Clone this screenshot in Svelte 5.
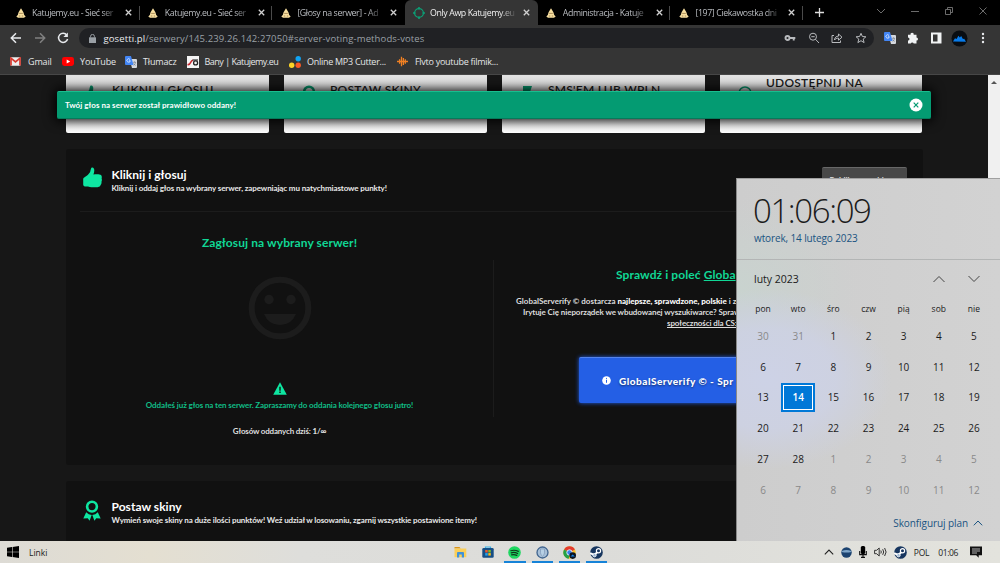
<script>
  const tabs = [
    { title: "Katujemy.eu - Sieć ser", icon: "hat" },
    { title: "Katujemy.eu - Sieć ser", icon: "hat" },
    { title: "[Głosy na serwer] - Ad", icon: "hat" },
    { title: "Only Awp Katujemy.eu", icon: "target", active: true },
    { title: "Administracja - Katuje", icon: "hat" },
    { title: "[197] Ciekawostka dni", icon: "hat" },
  ];

  const bookmarks = [
    { label: "Gmail", icon: "gmail", width: 52 },
    { label: "YouTube", icon: "youtube", width: 63 },
    { label: "Tłumacz", icon: "translate", width: 61.5 },
    { label: "Bany | Katujemy.eu", icon: "bans", width: 102.5 },
    { label: "Online MP3 Cutter...", icon: "cutter", width: 108 },
    { label: "Flvto youtube filmik...", icon: "flvto", width: 110 },
  ];

  const cards = [
    { title: "KLIKNIJ I GŁOSUJ", icon: "thumb" },
    { title: "POSTAW SKINY", icon: "award" },
    { title: "SMS'EM LUB WPLN", icon: "bookmark" },
    { title: "UDOSTĘPNIJ NA", icon: "ring", high: true },
  ];

  const weekdays = ["pon", "wto", "śro", "czw", "pią", "sob", "nie"];
  const today = 15;
  const days = Array.from({ length: 42 }, (_, i) => {
    if (i < 2) return { n: 30 + i, other: true };
    if (i < 30) return { n: i - 1, other: false };
    return { n: i - 29, other: true };
  });

  const apps = ["explorer", "store", "spotify", "badge", "chrome", "steam"];
</script>

{#snippet icon(name)}
  {#if name === "hat"}
    <svg width="10" height="10" viewBox="0 0 10 10">
      <path d="M5 .3 7.4 4.2 8.2 7 9.7 8.6 8 9.8H2L.3 8.6 1.8 7l.8-2.8z" fill="#f7dfa0" />
      <path d="M3.2 5.4h3.6M2.8 8h1.5M5.8 8h1.4" stroke="#8b6a3c" stroke-width=".7" />
    </svg>
  {:else if name === "target"}
    <svg width="12" height="12" viewBox="0 0 12 12" fill="none" stroke="#0b9f75" stroke-width="1.3">
      <circle cx="6" cy="6" r="4.4" />
      <path d="M6 0v2.4M6 9.6V12M0 6h2.4M9.600 6H12" stroke-width="1.6" />
    </svg>
  {:else if name === "gmail"}
    <svg width="11" height="9" viewBox="0 0 11 9">
      <rect x=".3" y=".3" width="10.4" height="8.4" rx="1" fill="#eee" />
      <path d="M1 8.5V1.2l4.5 3.7L10 1.2v7.3" fill="none" stroke="#d5392f" stroke-width="1.7" />
    </svg>
  {:else if name === "youtube"}
    <svg width="12" height="9" viewBox="0 0 12 9">
      <rect width="12" height="9" rx="2.4" fill="#f00" />
      <path d="m4.7 2.5 3.5 2-3.5 2z" fill="#fff" />
    </svg>
  {:else if name === "translate"}
    <svg width="12" height="12" viewBox="0 0 12 12">
      <path d="M4.5 3H11a1 1 0 0 1 1 1v7a1 1 0 0 1-1 1H7z" fill="#d5d8dd" />
      <path d="M8 6.300h3M9.500 5.300v1M10.600 6.400C10.300 8 9.300 9 8.600 9.400M8.500 7.400l2 2.200" stroke="#6c7785" stroke-width=".6" fill="none" />
      <path d="M1 0h5l2.500 9H1a1 1 0 0 1-1-1V1a1 1 0 0 1 1-1z" fill="#4285f4" />
      <path d="M5 3.500A1.700 1.700 0 1 0 5.300 4.800H4" fill="none" stroke="#e9f1ff" stroke-width=".8" />
    </svg>
  {:else if name === "bans"}
    <svg width="12" height="12" viewBox="0 0 12 12">
      <rect width="12" height="12" fill="#f5f5f5" />
      <path d="M.5 8.5c4 1 2.500-4.500 5.500-4.300" fill="none" stroke="#c82a31" stroke-width="1.6" />
      <circle cx="8.600" cy="6.900" r="2" fill="none" stroke="#222" stroke-width="1.3" />
      <path d="M5.600 4h5.400" stroke="#222" stroke-width="1.1" />
    </svg>
  {:else if name === "cutter"}
    <svg width="12" height="12" viewBox="0 0 12 12">
      <circle cx="9.2" cy="2.8" r="2.7" fill="#10a4f4" />
      <circle cx="2.7" cy="9.2" r="2.7" fill="#fdd326" />
      <circle cx="9.2" cy="9.2" r="2.7" fill="#fa5a25" />
    </svg>
  {:else if name === "flvto"}
    <svg width="11" height="11" viewBox="0 0 11 11" stroke="#f08023" stroke-width="1.3">
      <path d="M.8 4.8v1.4M2.6 3.3v4.4M4.5.8v9.4M6.4 2v7M8.3 3.2v4.6M10.2 4.8v1.4M0 5.5h11" />
    </svg>
  {:else if name === "thumb"}
    <svg width="19" height="21" viewBox="0 0 19 21" fill="currentColor">
      <path d="M.2 12.400Q0 10.800 1.600 10.200 5 8.500 7 5.200C8 3.400 7.500.6 9.300.6c2.600 0 2.300 4.400 1.100 6.900 2.800-.5 6.700-.4 7.600.5 1 1 .9 2.500.6 3.500.5 1.300.4 2.300-.1 3.200.2 1.600-.2 2.600-.9 3.300-.4 2-2.300 2.200-4.900 2.200-3.200 0-5.400-.2-7.700-.8H1.700Q.2 19.200.2 17.800z" />
    </svg>
  {:else if name === "award"}
    <svg width="18" height="21" viewBox="0 0 18 21">
      <circle cx="9" cy="6.600" r="4.900" fill="none" stroke="currentColor" stroke-width="2.600" />
      <path d="M3.200 12.200Q5.500 14.700 8.700 14.900L6.600 20.800 4.700 18.200.3 18.500zM14.800 12.200Q12.500 14.700 9.300 14.900l2.100 5.900 1.900-2.600 4.400.3z" fill="currentColor" />
    </svg>
  {:else if name === "bookmark"}
    <svg width="18" height="21" viewBox="0 0 18 21" fill="currentColor"><path d="M5 1h9l-3 9H5z" /></svg>
  {:else if name === "ring"}
    <svg width="18" height="21" viewBox="0 0 18 21" fill="none" stroke="currentColor" stroke-width="1.500"><circle cx="9" cy="8" r="6" /></svg>
  {:else if name === "steam"}
    <svg width="13" height="13" viewBox="0 0 13 13">
      <circle cx="6.500" cy="6.500" r="6.300" fill="#17365f" />
      <path d="m0 7.200 4.300 1.700 3.800-3.300" stroke="#fff" stroke-width="2" fill="none" />
      <circle cx="8.500" cy="4.700" r="2.100" fill="#17365f" stroke="#fff" stroke-width="1.200" />
      <circle cx="4.500" cy="9.200" r="1.700" fill="#9eb8d5" stroke="#fff" stroke-width=".8" />
    </svg>
  {:else if name === "explorer"}
    <svg width="13" height="12" viewBox="0 0 13 12">
      <path d="M.5 1h5l1.200 1.500H.5z" fill="#d9941a" />
      <path d="M.5 2.500h11.800v8.700H.5z" fill="#fbcf59" />
      <path d="M3 11.500V7q0-1 1-1h5q1 0 1 1v4.500H7.800V8.600H5.200v2.900z" fill="#3f92da" />
    </svg>
  {:else if name === "store"}
    <svg width="12" height="12" viewBox="0 0 12 12">
      <path d="M3.500 2.500V1h5v1.500" fill="none" stroke="#36b4ea" stroke-width="1.200" />
      <rect x=".3" y="2" width="11.400" height="9.700" rx="1.300" fill="#174f86" />
      <path d="M3.200 4h2.500v2.500H3.200z" fill="#f25a2b" /><path d="M6.300 4h2.500v2.500H6.300z" fill="#7fba26" />
      <path d="M3.200 7.100h2.500v2.500H3.200z" fill="#20a4ed" /><path d="M6.300 7.100h2.500v2.500H6.300z" fill="#fbbb18" />
    </svg>
  {:else if name === "spotify"}
    <svg width="13" height="13" viewBox="0 0 13 13">
      <circle cx="6.500" cy="6.500" r="6.300" fill="#1ed760" />
      <path d="M2.800 4.700q4-1.200 7.500.7M3.200 6.800q3.400-.9 6.400.7M3.600 8.800q2.800-.7 5.200.6" fill="none" stroke="#10371d" stroke-width="1.200" stroke-linecap="round" />
    </svg>
  {:else if name === "badge"}
    <svg width="13" height="13" viewBox="0 0 13 13">
      <circle cx="6.500" cy="6.500" r="5.500" fill="#a8c0d8" stroke="#41658f" stroke-width="1.300" />
      <path d="M4.500 3h4v3.800Q8.500 9 6.500 10.200 4.500 9 4.500 6.800z" fill="#b7d0e5" stroke="#7c98b8" stroke-width=".7" />
    </svg>
  {:else if name === "chrome"}
    <svg width="13" height="13" viewBox="0 0 13 13">
      <circle cx="6.500" cy="6.500" r="6.200" fill="#f9c22c" />
      <path d="M6.500 6.500 1.100 3.400a6.200 6.200 0 0 1 10.800 0z" fill="#e33b2e" />
      <path d="M6.500 6.500 1.100 3.400a6.200 6.200 0 0 0 4.700 9.300z" fill="#26a148" />
      <circle cx="6.500" cy="6.500" r="2.700" fill="#3b7de9" stroke="#fff" stroke-width=".8" />
      <circle cx="9.700" cy="9.600" r="3.300" fill="#0b1420" />
      <path d="M7.500 10.500 9.700 8.600l2.200 1.900z" fill="#1686ef" />
    </svg>
  {/if}
{/snippet}

<div class="screen">
  <nav class="tabs">
    {#each tabs as tab}
      <div class="tab" class:active={tab.active}>
        <span class="favicon">{@render icon(tab.icon)}</span>
        <span class="tab-title">{tab.title}</span>
        <svg class="close" width="7" height="7" viewBox="0 0 7 7"><path d="m.8.8 5.400 5.400M6.200.8.8 6.200" /></svg>
      </div>
    {/each}
    <svg class="plus" width="9" height="9" viewBox="0 0 9 9"><path d="M4.500 0v9M0 4.500h9" /></svg>
    <div class="window-controls">
      <svg width="10" height="10" viewBox="0 0 10 10"><path d="m1 3 4 4 4-4" /></svg>
      <svg width="10" height="10" viewBox="0 0 10 10"><path d="M1 5.500h8" /></svg>
      <svg width="10" height="10" viewBox="0 0 10 10"><path d="M1.500 3.500h5v5h-5zM3.500 3.500v-2h5v5h-2" /></svg>
      <svg width="10" height="10" viewBox="0 0 10 10"><path d="m1.500 1.500 7 7M8.500 1.500l-7 7" /></svg>
    </div>
  </nav>

  <div class="toolbar">
    <svg class="nav-icon" width="12" height="12" viewBox="0 0 12 12"><path d="M11 6H1.500M6 1.300 1.300 6 6 10.700" /></svg>
    <svg class="nav-icon dim" width="12" height="12" viewBox="0 0 12 12"><path d="M1 6h9.500M6 1.300 10.700 6 6 10.700" /></svg>
    <svg class="nav-icon" width="12" height="12" viewBox="0 0 12 12"><path d="M9.800 3A4.600 4.600 0 1 0 10.600 7" /><path d="M10.900.6v4.500H6.400z" fill="#e8eaed" stroke="none" /></svg>
    <div class="omnibox">
      <svg class="lock" width="7" height="9" viewBox="0 0 7 9"><path d="M0 3.300h7V9H0z" fill="#9aa0a6" /><path d="M1.600 3.500V2.300a1.900 1.900 0 0 1 3.800 0v1.200" fill="none" stroke="#9aa0a6" stroke-width="1" /></svg>
      <span class="url"><b>gosetti.pl</b>/serwery/145.239.26.142:27050#server-voting-methods-votes</span>
      <div class="omni-actions">
        <svg width="12" height="12" viewBox="0 0 12 12"><circle cx="3.500" cy="6" r="2" stroke-width="1.900" /><path d="M5.500 6h5.800M9.700 6v2.600" stroke-width="1.900" /></svg>
        <svg width="12" height="12" viewBox="0 0 12 12"><circle cx="5" cy="4.700" r="3.500" /><path d="m7.500 7.300 3.500 3.700M3.300 4.700h3.400" /></svg>
        <svg width="12" height="12" viewBox="0 0 12 12"><path d="M3 3.500H1v7h8.500v-2M3.400 8C3.800 5.300 5.300 4.200 7.500 4.100V2l3.500 3.200-3.500 3V6.100C5.700 6.100 4.400 6.700 3.400 8z" /></svg>
        <svg width="12" height="12" viewBox="0 0 12 12"><path d="m6 1.300 1.400 3.200 3.500.3-2.700 2.300.9 3.500L6 8.700l-3.100 1.900.9-3.500L1.100 4.800l3.500-.3z" /></svg>
      </div>
    </div>
    <div class="extensions">
      {@render icon("translate")}
      <svg width="12" height="12" viewBox="0 0 12 12" fill="#f1f3f4"><path d="M1 2.800h2.600a1.600 1.600 0 1 1 3 0h2.900v2.800a1.500 1.500 0 1 1 0 3v2.900H6.700a1.600 1.600 0 0 0-3 0H1V8.600a1.500 1.500 0 0 0 0-3z" /></svg>
      <svg width="12" height="12" viewBox="0 0 12 12"><path d="M1 .500h10.500v11H1z" fill="#f1f3f4" /><path d="M3 2.500h4.500v7H3z" fill="#353535" /></svg>
      <svg width="17" height="17" viewBox="0 0 17 17"><circle cx="8.500" cy="8.500" r="8" fill="#090d12" /><path d="M2 11.500 4 8.200l1.600.7 1.800-3.100 1.400 1.600 1.400-1.300 1.700 3 1.300-.3 1.800 2.900z" fill="#087bea" /></svg>
      <svg width="4" height="12" viewBox="0 0 4 12" fill="#e8eaed"><circle cx="2" cy="2" r="1.200" /><circle cx="2" cy="6" r="1.200" /><circle cx="2" cy="10" r="1.200" /></svg>
    </div>
  </div>

  <div class="bookmarks">
    {#each bookmarks as mark}
      <div class="bookmark" style={`width:${mark.width}px`}>
        <span class="mark-icon">{@render icon(mark.icon)}</span>
        <span class={`mark-label ${mark.icon}`}>{mark.label}</span>
      </div>
    {/each}
  </div>

  <main>
    <div class="content">
      <div class="cards">
        {#each cards as card}
          <div class="card" class:high={card.high}>
            <span class="card-icon">{@render icon(card.icon)}</span>
            <span class="card-title">{card.title}</span>
          </div>
        {/each}
      </div>

      <section class="panel vote">
        <header>
          <span class="panel-icon">{@render icon("thumb")}</span>
          <div>
            <h2>Kliknij i głosuj</h2>
            <p class="sub-vote">Kliknij i oddaj głos na wybrany serwer, zapewniając mu natychmiastowe punkty!</p>
          </div>
          <button class="points">Publikowane klasty</button>
        </header>
        <div class="columns">
          <div class="left">
            <h3>Zagłosuj na wybrany serwer!</h3>
            <svg class="smile" width="64" height="64" viewBox="0 0 64 64">
              <circle cx="32" cy="32" r="28.300" fill="none" stroke="#1c1c1c" stroke-width="6" />
              <circle cx="21" cy="23.500" r="4.700" fill="#1c1c1c" />
              <circle cx="43" cy="23.500" r="4.700" fill="#1c1c1c" />
              <path d="M16 38h32q-4.500 11-16 11T16 38z" fill="#1c1c1c" />
            </svg>
            <svg class="warning" width="14" height="13" viewBox="0 0 14 13"><path d="M7 .2 13.800 12.800H.2z" fill="#0ee6a1" /><path d="M7 4.700v4M7 9.600v1.300" stroke="#111" stroke-width="1.400" /></svg>
            <p class="voted">Oddałeś już głos na ten serwer. Zapraszamy do oddania kolejnego głosu jutro!</p>
            <p class="count">Głosów oddanych dziś: <b>1/∞</b></p>
          </div>
          <div class="right">
            <h3>Sprawdź i poleć <u>Globa</u></h3>
            <p class="line-a">GlobalServerify © dostarcza <b>najlepsze, sprawdzone, polskie</b> i za</p>
            <p class="line-b">Irytuje Cię nieporządek we wbudowanej wyszukiwarce? Spraw</p>
            <p class="line-c"><u>społeczności dla CS:</u></p>
            <button class="promo">
              <svg width="9" height="9" viewBox="0 0 9 9"><circle cx="4.500" cy="4.500" r="4.300" fill="#fff" /><path d="M4.500 1.900v1M4.500 3.800v3" stroke="#245fe5" stroke-width="1" /></svg>
              <span>GlobalServerify © - Spr</span>
            </button>
          </div>
        </div>
      </section>

      <section class="panel skins">
        <header>
          <span class="panel-icon">{@render icon("award")}</span>
          <div>
            <h2>Postaw skiny</h2>
            <p class="sub-skins">Wymień swoje skiny na duże ilości punktów! Weź udział w losowaniu, zgarnij wszystkie postawione itemy!</p>
          </div>
        </header>
      </section>
    </div>
    <div class="scrollbar"><span></span></div>

    <div class="toast">
      <span>Twój głos na serwer został prawidłowo oddany!</span>
      <svg width="14" height="14" viewBox="0 0 14 14"><circle cx="7" cy="7" r="6.500" fill="#fff" /><path d="m4.700 4.700 4.600 4.600M9.300 4.700 4.700 9.300" stroke="#049b72" stroke-width="1.200" /></svg>
    </div>
  </main>

  <aside class="calendar">
    <div class="clock">
      <div class="time">01:06:09</div>
      <div class="date">wtorek, 14 lutego 2023</div>
    </div>
    <div class="month">
      <span>luty 2023</span>
      <svg width="12" height="8" viewBox="0 0 12 8"><path d="m.5 7 5.500-5.500L11.500 7" /></svg>
      <svg width="12" height="8" viewBox="0 0 12 8"><path d="M.5 1 6 6.500 11.500 1" /></svg>
    </div>
    <div class="weekdays">
      {#each weekdays as day}<span>{day}</span>{/each}
    </div>
    <div class="days">
      {#each days as day, i}
        <span class:other={day.other} class:today={i === today}>{day.n}</span>
      {/each}
    </div>
    <div class="agenda">
      <span>Skonfiguruj plan</span>
      <svg width="10" height="6" viewBox="0 0 10 6"><path d="M.8 5.300 5 1l4.200 4.300" /></svg>
    </div>
  </aside>

  <footer class="taskbar">
    <svg class="start" width="12" height="12" viewBox="0 0 12 12"><path d="M0 1.700 5 1v4.700H0zM5.600.9 12 0v5.700H5.600zM0 6.300h5V11l-5-.7zM5.600 6.300H12V12l-6.400-.9z" /></svg>
    <span class="links">Linki</span>
    <div class="apps">
      {#each apps as app, i}
        <span class:running={i > 1}>{@render icon(app)}</span>
      {/each}
    </div>
    <div class="tray">
      <svg width="10" height="6" viewBox="0 0 10 6"><path d="M.8 5.300 5 1l4.200 4.300" fill="none" stroke="#222" stroke-width="1.100" /></svg>
      <svg width="11" height="11" viewBox="0 0 11 11"><circle cx="5.500" cy="5.500" r="5.200" fill="#1c4370" /><path d="M.7 4q4.800-2 9.600 0v1q-4.800 1-9.600 0z" fill="#7ea5c9" /></svg>
      <svg width="8" height="12" viewBox="0 0 8 12"><rect x="1.800" y="0" width="4.400" height="8" rx="1.500" /><path d="M.7 5v3.600h6.600V5M4 8.600v3M2 11.400h4" fill="none" stroke="#111" stroke-width="1.100" /></svg>
      <svg width="13" height="10" viewBox="0 0 13 10" fill="none" stroke="#222" stroke-width=".9"><path d="M.6 3.300h2L5.200 1v8L2.600 6.700h-2zM6.800 3.500q1 1.500 0 3M8.700 2.200q2 2.800 0 5.600M10.600 1q3 4 0 8" /></svg>
      {@render icon("steam")}
      <span class="lang">POL</span>
      <span class="hour">01:06</span>
      <svg width="12" height="12" viewBox="0 0 12 12"><path d="M0 .5h12v8.800H8.700v2.500L6.200 9.300H0z" fill="#111" /><path d="M2 3h8M2 5h8M2 7h5" stroke="#ddd" stroke-width=".8" /></svg>
    </div>
  </footer>
</div>

<style>
  :global(body) {
    margin: 0;
    overflow: hidden;
  }

  .screen {
    position: relative;
    width: 1000px;
    height: 563px;
    display: flex;
    flex-direction: column;
    overflow: hidden;
    background: #171717;
    font-family: "Open Sans", "Noto Sans", sans-serif;
    white-space: nowrap;
  }

  .screen * {
    box-sizing: border-box;
  }

  svg {
    display: block;
    flex: none;
  }

  h2, h3, p {
    margin: 0;
  }

  .tabs {
    flex: none;
    height: 25px;
    padding-left: 7px;
    display: flex;
    align-items: center;
    background: #000;
  }

  .tab {
    width: 132.700px;
    height: 25px;
    padding: 0 7px;
    display: flex;
    align-items: center;
    position: relative;
    color: #b9bcc0;
    font-size: 8.800px;
  }

  .tab::after {
    content: "";
    position: absolute;
    right: 0;
    top: 6px;
    height: 14px;
    border-right: 1px solid #4a4a4a;
  }

  .tab:nth-child(3)::after,
  .tab.active::after {
    display: none;
  }

  .tab.active {
    background: #353535;
    border-radius: 6px 6px 0 0;
    color: #f0f0f0;
  }

  .favicon {
    width: 13px;
    margin-right: 5px;
    display: flex;
    justify-content: center;
  }

  .tab-title {
    width: 88px;
    letter-spacing: -0.400px;
    -webkit-mask-image: linear-gradient(90deg, #000 80%, transparent 99%);
    mask-image: linear-gradient(90deg, #000 80%, transparent 99%);
  }

  .close {
    margin-left: 5px;
    stroke: #d0d0d0;
    stroke-width: 1.300;
  }

  .plus {
    margin-left: 12px;
    stroke: #ddd;
    stroke-width: 1.300;
  }

  .window-controls {
    margin: 0 12px 4px auto;
    display: flex;
    gap: 24px;
    fill: none;
    stroke: #777;
    stroke-width: 0.900;
  }

  .toolbar {
    flex: none;
    height: 26px;
    padding-left: 10px;
    display: flex;
    align-items: center;
    background: #353535;
  }

  .nav-icon {
    margin-right: 11.500px;
    fill: none;
    stroke: #e8eaed;
    stroke-width: 1.500;
  }

  .nav-icon.dim {
    stroke: #808080;
  }

  .omnibox {
    width: 795px;
    height: 20px;
    margin-left: -2px;
    padding: 0 7px 0 10px;
    display: flex;
    align-items: center;
    border-radius: 10px;
    background: #202124;
  }

  .url {
    margin-left: 8px;
    color: #9aa0a6;
    font-size: 9.500px;
    letter-spacing: 0.120px;
  }

  .url b {
    color: #e8eaed;
    font-weight: 400;
  }

  .omni-actions {
    margin-left: auto;
    display: flex;
    gap: 11.500px;
    fill: none;
    stroke: #b8babd;
    stroke-width: 1;
  }

  .extensions {
    margin-left: 10px;
    display: flex;
    align-items: center;
    gap: 11.200px;
  }

  .extensions svg:nth-child(4) {
    margin-left: -2px;
  }

  .extensions svg:nth-child(5) {
    margin-left: 2px;
  }

  .bookmarks {
    flex: none;
    height: 24px;
    padding: 0 0 2px 10px;
    display: flex;
    align-items: center;
    background: #353535;
    border-bottom: 1px solid #474747;
  }

  .bookmark {
    flex: none;
    display: flex;
    align-items: center;
    color: #e4e6e8;
    font-size: 9px;
  }

  .mark-icon {
    flex: none;
    width: 12px;
    margin-right: 6px;
  }

  .mark-label {
    letter-spacing: -0.280px;
  }

  .gmail,
  .youtube,
  .translate {
    letter-spacing: -0.150px;
  }

  .mark-label.bans {
    letter-spacing: -0.500px;
  }

  main {
    position: relative;
    flex: none;
    height: 466px;
    display: flex;
    background: #171717;
    overflow: hidden;
    font-family: Lato, "Open Sans", sans-serif;
  }

  .content {
    width: 988px;
    padding: 0 65.500px 0 66px;
  }

  .cards {
    display: flex;
    gap: 15.400px;
  }

  .card {
    flex: 1;
    height: 58px;
    padding: 8px 0 0 14px;
    display: flex;
    background: linear-gradient(#e2e2e2, #fff);
    border-radius: 0 0 2px 2px;
    color: #1c1c1c;
    overflow: hidden;
  }

  .card-icon {
    width: 32px;
    padding: 2px 0 0 2px;
    color: #079b70;
  }

  .card-title {
    font-size: 12px;
    font-weight: 600;
    line-height: 14px;
    letter-spacing: 0.250px;
  }

  .card.high .card-title {
    margin-top: -7px;
  }

  .panel {
    background: #111;
    border-radius: 3px;
    color: #fff;
  }

  .panel header {
    height: 63px;
    padding: 18px 0 0 3px;
    display: flex;
    align-items: flex-start;
  }

  .vote {
    height: 316px;
    margin-top: 16px;
    padding: 0 14px;
  }

  .vote header {
    border-bottom: 1px solid #1c1c1c;
  }

  .skins {
    height: 61px;
    margin-top: 16px;
    padding: 0 14px;
  }

  .panel-icon {
    width: 28.500px;
    padding-top: 1px;
    color: #0ee6a1;
  }

  .vote .panel-icon {
    padding-top: 0;
  }

  h2 {
    font-size: 12px;
    font-weight: 700;
    line-height: 15px;
    letter-spacing: 0.030px;
  }

  header p {
    font-size: 8px;
    font-weight: 700;
    line-height: 12px;
    letter-spacing: -0.110px;
    color: #e8e8e8;
  }

  .points {
    width: 85px;
    height: 24px;
    margin: 0 2px 0 auto;
    padding: 0;
    background: #484848;
    border: 0;
    border-top: 1px solid #686868;
    border-radius: 2px;
    color: #ddd;
    font-family: inherit;
    font-size: 8px;
    font-weight: 700;
  }

  .columns {
    display: flex;
  }

  .left {
    flex: none;
    width: 413px;
    padding: 23px 14px 0 0;
    display: flex;
    flex-direction: column;
    align-items: center;
  }

  h3 {
    font-size: 12px;
    font-weight: 700;
    line-height: 16px;
    letter-spacing: 0.090px;
    color: #10d795;
  }

  .smile {
    margin-top: 25px;
  }

  .warning {
    margin-top: 42px;
  }

  .left p {
    font-size: 8px;
    line-height: 12px;
    font-weight: 700;
    letter-spacing: -0.110px;
  }

  .left .voted {
    margin-top: 4px;
    color: #10bd86;
  }

  .left .count {
    margin-top: 14px;
    letter-spacing: -0.180px;
    color: #ddd;
  }

  .right {
    flex: 1;
    height: 157px;
    margin-top: 48px;
    padding-top: 7px;
    border-left: 1px solid #1c1c1c;
  }

  .right h3 {
    margin: 0 0 13px 122px;
  }

  .right p {
    font-size: 8px;
    line-height: 11px;
    color: #ddd;
    font-weight: 700;
  }

  .right p b {
    color: #fff;
    font-weight: 900;
  }

  .line-a {
    padding-left: 22px;
  }

  .line-b {
    padding-left: 29px;
    letter-spacing: -0.080px;
  }

  .line-c {
    padding-left: 173px;
    letter-spacing: -0.100px;
  }

  .promo {
    width: 243px;
    height: 46px;
    margin: 28px 0 0 85px;
    padding: 0 0 0 23px;
    display: flex;
    align-items: center;
    gap: 8px;
    background: #245fe5;
    border: 0;
    border-top: 1px solid #5583ec;
    border-radius: 2px;
    box-shadow: 0 0 4px #245fe5;
    color: #fff;
    font-family: inherit;
    font-size: 10px;
    font-weight: 900;
    letter-spacing: 0.500px;
    text-shadow: 0 1px 2px rgba(0, 0, 0, 0.5);
  }

  .scrollbar {
    width: 12px;
    padding: 6px 0 0 3px;
    background: #f0f0f0;
  }

  .scrollbar span {
    display: block;
    width: 0;
    border: 3px solid transparent;
    border-top: 0;
    border-bottom: 3px solid #555;
  }

  .toast {
    position: absolute;
    left: 57px;
    top: 16px;
    width: 873.500px;
    height: 28px;
    padding: 0 8px;
    display: flex;
    align-items: center;
    justify-content: space-between;
    background: #049b72;
    border-top: 1px solid #19bd8e;
    border-bottom: 1px solid #057b5b;
    border-radius: 2px;
    box-shadow: 0 0 12px 2px #000;
    color: #fff;
    font-size: 8px;
    font-weight: 700;
    letter-spacing: 0.050px;
  }

  .calendar {
    position: absolute;
    left: 736px;
    top: 178px;
    width: 264px;
    height: 363px;
    border-left: 1px solid #898989;
    border-top: 1px solid #a0a0a0;
    background:
      radial-gradient(ellipse 125px 90px at 30px 200px, #cdd2e6 0, rgba(205, 210, 230, 0.800) 55%, transparent),
      radial-gradient(ellipse 120px 90px at 0 110px, #c9d3cf, transparent),
      linear-gradient(90deg, #cdcdcd, #d2d2d2);
    color: #1b1b1b;
  }

  .clock {
    height: 81px;
    padding: 11px 0 0 16px;
    border-bottom: 1px solid #b3b5b5;
  }

  .time {
    height: 41px;
    line-height: 41px;
    font-family: "Open Sans", sans-serif;
    font-size: 33px;
    font-weight: 300;
    letter-spacing: -1.400px;
  }

  .date {
    padding-left: 1px;
    color: #195381;
    font-size: 10px;
    line-height: 14px;
    letter-spacing: -0.120px;
  }

  .month {
    height: 38px;
    padding: 0 20px 0 17px;
    display: flex;
    align-items: center;
    font-size: 10.500px;
    fill: none;
    stroke: #444;
  }

  .month span {
    margin-right: auto;
    stroke: none;
  }

  .month svg + svg {
    margin-left: 23px;
  }

  .weekdays, .days {
    display: grid;
    grid-template-columns: repeat(7, 35.150px);
    margin-left: 8.500px;
    text-align: center;
  }

  .weekdays {
    height: 22.500px;
    font-size: 8.500px;
    line-height: 21px;
  }

  .days {
    grid-auto-rows: 30.800px;
    place-items: center;
    font-size: 10px;
  }

  .other {
    color: #898989;
  }

  .today {
    width: 34px;
    height: 29px;
    line-height: 23px;
    background: #0078d7;
    border: 1px solid #0078d7;
    box-shadow: inset 0 0 0 1px #0078d7, inset 0 0 0 2px #fff;
    color: #fff;
    font-weight: 600;
    padding-top: 2px;
  }

  .agenda {
    height: 36px;
    padding-right: 17px;
    display: flex;
    align-items: center;
    justify-content: flex-end;
    gap: 5px;
    color: #195381;
    font-size: 10px;
    letter-spacing: -0.080px;
    fill: none;
    stroke: #195381;
  }

  .agenda span {
    stroke: none;
  }

  .taskbar {
    position: relative;
    flex: none;
    height: 22px;
    padding-left: 7px;
    display: flex;
    align-items: center;
    background: linear-gradient(90deg, #dddbd5, #e4dfd1 15%, #dededb 30%, #dcdcd9 60%, #e3e3dd);
    color: #222;
    font-size: 8.500px;
  }

  .links {
    width: 45px;
    margin-left: 10px;
  }

  .apps {
    width: 163px;
    height: 22px;
    margin-left: 373px;
    display: flex;
  }

  .apps span {
    width: 27.200px;
    height: 22px;
    display: grid;
    place-items: center;
    position: relative;
  }

  .running::after {
    content: "";
    position: absolute;
    left: 3px;
    right: 3px;
    bottom: 0;
    height: 2px;
    background: #1683d8;
  }

  .tray {
    margin: 0 18px 0 auto;
    display: flex;
    align-items: center;
    gap: 7px;
  }

  .lang {
    letter-spacing: -0.200px;
  }

  .hour {
    margin: 0 5px 0 2px;
    letter-spacing: -0.400px;
  }
</style>
